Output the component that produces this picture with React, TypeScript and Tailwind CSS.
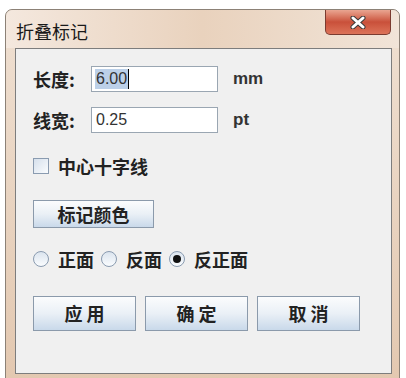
const cjk = "font-['Noto_Sans_CJK_SC',sans-serif]";
const latin = "font-['Liberation_Sans',Arial,sans-serif]";

const Field = ({ label, value, unit, selected }: { label: string; value: string; unit: string; selected?: boolean }) => (
  <div className="flex items-center h-[26px]">
    <span className={`${cjk} w-[58px] text-[18px] font-bold text-[#222]`}>{label}</span>
    <div className="flex items-center w-[127px] h-[26px] border border-[#9aa6b2] bg-white pl-[3px]">
      {selected ? (
        <>
          <span className={`${latin} text-[16px] text-[#333] bg-[#bcd0e8] leading-[20px] px-[1px]`}>{value}</span>
          <span className="w-px h-[20px] bg-black" />
        </>
      ) : (
        <span className={`${latin} text-[16px] text-[#333] leading-[20px] px-[1px]`}>{value}</span>
      )}
    </div>
    <span className={`${latin} ml-[15px] text-[17px] font-bold text-[#333]`}>{unit}</span>
  </div>
);

const Radio = ({ label, checked }: { label: string; checked?: boolean }) => (
  <div className="flex items-center gap-[9px]">
    <span className="flex items-center justify-center w-[16px] h-[16px] rounded-full border border-[#8a9bb0] bg-gradient-to-b from-[#dbe4ee] to-[#fafcfe]">
      {checked && <span className="w-[8px] h-[8px] rounded-full bg-[#111]" />}
    </span>
    <span className={`${cjk} text-[18px] font-bold text-[#222]`}>{label}</span>
  </div>
);

const Btn = ({ children, w }: { children: string; w: string }) => (
  <button
    className={`${cjk} ${w} flex items-center justify-center border border-[#8b9aab] bg-gradient-to-b from-[#fbfcfd] via-[#eaf0f6] to-[#c9d9ea] text-[18px] font-bold text-[#222]`}
  >
    {children}
  </button>
);

export default function App() {
  return (
    <div className="w-[406px] h-[378px] bg-white overflow-hidden relative">
      <div className="absolute left-[5px] top-[9px] w-[395px] h-[375px] rounded-t-[7px] border border-[#8c8176] bg-gradient-to-b from-[#efe0d2] to-[#e3c8b0] flex flex-col">
        <div className="h-[38px] flex items-start justify-between bg-gradient-to-r from-[#f4e8de] via-[#e9d2bd] to-[#f1e4d8] rounded-t-[7px]">
          <span className={`${cjk} mt-[8px] ml-[10px] text-[18px] text-[#1a1a1a]`}>折叠标记</span>
          <div className="mr-[8px] w-[66px] h-[25px] rounded-b-[5px] border border-t-0 border-[#7a3b30] bg-gradient-to-b from-[#e9a591] via-[#c9503a] to-[#dc7359] flex items-center justify-center">
            <svg width="18" height="13" viewBox="0 0 18 13">
              <path d="M4 2 L14 11 M14 2 L4 11" stroke="#3a3a3a" strokeWidth="5" strokeLinecap="round" />
              <path d="M4 2 L14 11 M14 2 L4 11" stroke="#ffffff" strokeWidth="3" strokeLinecap="round" />
            </svg>
          </div>
        </div>
        <div className="ml-[9px] mr-[7px] h-[326px] border border-[#7d7d7d] bg-[#f0f0f0] pl-[17px] pt-[17px] flex flex-col">
          <Field label="长度:" value="6.00" unit="mm" selected />
          <div className="mt-[15px]">
            <Field label="线宽:" value="0.25" unit="pt" />
          </div>
          <div className="mt-[23px] h-[20px] flex items-center gap-[9px]">
            <span className="w-[16px] h-[16px] border border-[#8a9bb0] bg-gradient-to-br from-[#d6e0ec] to-[#fafcfe]" />
            <span className={`${cjk} text-[18px] font-bold text-[#222]`}>中心十字线</span>
          </div>
          <div className="mt-[24px] flex">
            <Btn w="w-[121px] h-[28px]">标记颜色</Btn>
          </div>
          <div className="mt-[21px] h-[20px] flex items-center gap-[7px]">
            <Radio label="正面" />
            <Radio label="反面" />
            <Radio label="反正面" checked />
          </div>
          <div className="mt-[27px] flex gap-[9px]">
            <Btn w="w-[103px] h-[35px]">应 用</Btn>
            <Btn w="w-[103px] h-[35px]">确 定</Btn>
            <Btn w="w-[103px] h-[35px]">取 消</Btn>
          </div>
        </div>
      </div>
    </div>
  );
}
